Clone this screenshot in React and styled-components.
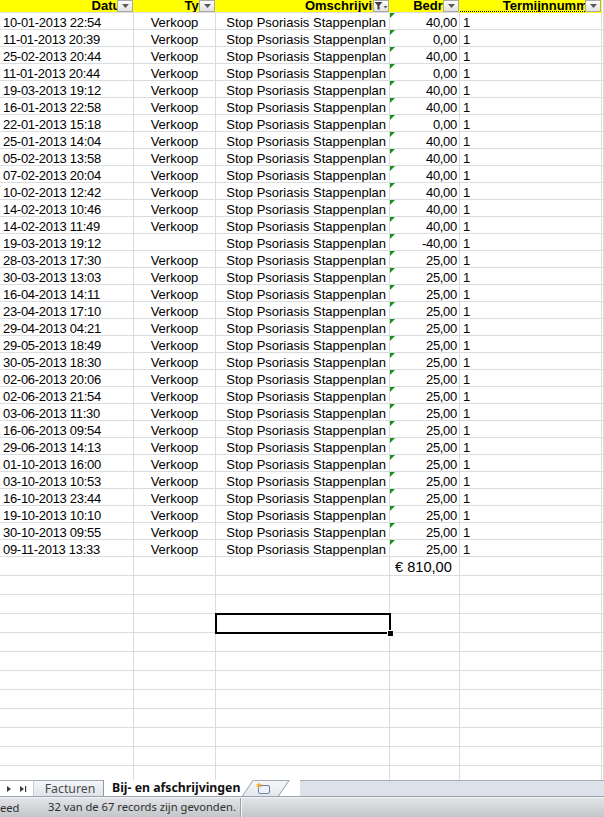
import React from "react";
import styled, { createGlobalStyle } from "styled-components";

const GlobalStyle = createGlobalStyle`
  html, body {
    margin: 0;
    padding: 0;
    height: 100%;
    overflow: hidden;
    background: #fff;
  }
  #root {
    height: 100%;
  }
`;

const COLS = "134px 82px 174px 70px 142px 1fr";
const GRID = "#dadcdd";

const rows = [
  ["10-01-2013 22:54", "Verkoop", "40,00"],
  ["11-01-2013 20:39", "Verkoop", "0,00"],
  ["25-02-2013 20:44", "Verkoop", "40,00"],
  ["11-01-2013 20:44", "Verkoop", "0,00"],
  ["19-03-2013 19:12", "Verkoop", "40,00"],
  ["16-01-2013 22:58", "Verkoop", "40,00"],
  ["22-01-2013 15:18", "Verkoop", "0,00"],
  ["25-01-2013 14:04", "Verkoop", "40,00"],
  ["05-02-2013 13:58", "Verkoop", "40,00"],
  ["07-02-2013 20:04", "Verkoop", "40,00"],
  ["10-02-2013 12:42", "Verkoop", "40,00"],
  ["14-02-2013 10:46", "Verkoop", "40,00"],
  ["14-02-2013 11:49", "Verkoop", "40,00"],
  ["19-03-2013 19:12", "", "-40,00"],
  ["28-03-2013 17:30", "Verkoop", "25,00"],
  ["30-03-2013 13:03", "Verkoop", "25,00"],
  ["16-04-2013 14:11", "Verkoop", "25,00"],
  ["23-04-2013 17:10", "Verkoop", "25,00"],
  ["29-04-2013 04:21", "Verkoop", "25,00"],
  ["29-05-2013 18:49", "Verkoop", "25,00"],
  ["30-05-2013 18:30", "Verkoop", "25,00"],
  ["02-06-2013 20:06", "Verkoop", "25,00"],
  ["02-06-2013 21:54", "Verkoop", "25,00"],
  ["03-06-2013 11:30", "Verkoop", "25,00"],
  ["16-06-2013 09:54", "Verkoop", "25,00"],
  ["29-06-2013 14:13", "Verkoop", "25,00"],
  ["01-10-2013 16:00", "Verkoop", "25,00"],
  ["03-10-2013 10:53", "Verkoop", "25,00"],
  ["16-10-2013 23:44", "Verkoop", "25,00"],
  ["19-10-2013 10:10", "Verkoop", "25,00"],
  ["30-10-2013 09:55", "Verkoop", "25,00"],
  ["09-11-2013 13:33", "Verkoop", "25,00"],
];

const headers = [
  { label: "Datum" },
  { label: "Type" },
  { label: "Omschrijving", filtered: true },
  { label: "Bedrag" },
  { label: "Termijnnummer", marquee: true },
];

const Arrow = () => (
  <svg width="7" height="4" viewBox="0 0 7 4">
    <path d="M0 0H7L3.5 4Z" fill="#595959" />
  </svg>
);

const Funnel = () => (
  <svg width="14" height="10" viewBox="0 0 14 10">
    <path d="M0.5 1H8.5L5.5 4.5V9L3.5 8V4.5Z" fill="#3c3c3c" />
    <path d="M9.5 5H13.5L11.5 7.5Z" fill="#595959" />
  </svg>
);

const NewSheetIcon = () => (
  <svg width="16" height="13" viewBox="0 0 16 13">
    <rect x="3.5" y="3.5" width="11" height="8" rx="1.5" fill="#eef3fb" stroke="#6d7f9c" />
    <path d="M1 2L3 2.6L4 0.5L5 2.6L7 2L5.6 3.6L6.6 5.4L4.4 4.6L3.6 6.6L3 4.6L1 5.2L2.4 3.6Z" fill="#f4a820" />
  </svg>
);

const NavArrows = () => (
  <svg width="30" height="16" viewBox="0 0 30 16">
    <path d="M7 5L11 8L7 11Z" fill="#3d3d3d" />
    <path d="M20 5L24 8L20 11Z" fill="#3d3d3d" />
    <rect x="25" y="5" width="1.2" height="6" fill="#3d3d3d" />
  </svg>
);

const App = () => {
  return (
    <Page>
      <GlobalStyle />
      <Sheet>
        <HeaderRow>
          {headers.map((h) => (
            <HeadCell key={h.label} $marquee={h.marquee}>
              {h.label}
              <FilterButton>{h.filtered ? <Funnel /> : <Arrow />}</FilterButton>
            </HeadCell>
          ))}
          <HeadCell $blank />
        </HeaderRow>
        {rows.map(([date, type, amount], i) => (
          <Row key={i} $h={17}>
            <Cell $pl={3} $tight>{date}</Cell>
            <Cell $align="center">{type}</Cell>
            <Cell $align="right" $pr={3}>Stop Psoriasis Stappenplan</Cell>
            <Cell $align="right" $pr={2} $flag $tight>{amount}</Cell>
            <Cell $pl={3}>1</Cell>
            <Cell />
          </Row>
        ))}
        <Row $h={19}>
          <Cell />
          <Cell />
          <Cell />
          <TotalCell>€ 810,00</TotalCell>
          <Cell />
          <Cell />
        </Row>
        {Array.from({ length: 12 }).map((_, i) => (
          <Row key={"e" + i} $h={19}>
            <Cell />
            <Cell />
            <Cell $open={i === 2}>{i === 2 && <Selection />}</Cell>
            <Cell />
            <Cell />
            <Cell />
          </Row>
        ))}
      </Sheet>
      <TabBar>
        <Nav>
          <NavArrows />
        </Nav>
        <SheetTab>Facturen</SheetTab>
        <ActiveTab>Bij- en afschrijvingen</ActiveTab>
        <NewTab>
          <NewSheetIcon />
        </NewTab>
        <TabGap />
        <ScrollArea />
      </TabBar>
      <StatusBar>
        <StatusLead>eed</StatusLead>
        <StatusItem>32 van de 67 records zijn gevonden.</StatusItem>
      </StatusBar>
    </Page>
  );
};

const Page = styled.div`
  height: 817px;
  display: flex;
  flex-direction: column;
  overflow: hidden;
  font-family: "Liberation Sans", Arial, sans-serif;
`;

const Sheet = styled.div`
  flex: 1;
  min-height: 0;
  overflow: hidden;
`;

const HeaderRow = styled.div`
  display: grid;
  grid-template-columns: ${COLS};
  height: 13px;
`;

const HeadCell = styled.div`
  position: relative;
  box-sizing: border-box;
  height: 13px;
  overflow: hidden;
  white-space: nowrap;
  text-align: right;
  padding-right: 1px;
  font: bold 13px/12px "Liberation Sans", Arial, sans-serif;
  color: #000;
  background: ${({ $blank }) => ($blank ? "#fff" : "#ffff00")};
  border-right: 1px solid ${({ $blank }) => ($blank ? GRID : "transparent")};
  border-bottom: 1px solid ${({ $marquee }) => ($marquee ? "transparent" : GRID)};
  ${({ $marquee }) =>
    $marquee &&
    `
    &::after {
      content: "";
      position: absolute;
      left: 0;
      right: 16px;
      bottom: 0;
      border-bottom: 1px dotted #000;
    }
  `}
`;

const FilterButton = styled.span`
  position: absolute;
  top: 0;
  right: 0;
  width: 16px;
  height: 12px;
  box-sizing: border-box;
  border: 1px solid #a9a9a9;
  background: linear-gradient(#fdfdfd, #e2e2e2);
  display: flex;
  align-items: center;
  justify-content: center;
`;

const Row = styled.div`
  display: grid;
  grid-template-columns: ${COLS};
  height: ${({ $h }) => $h}px;
`;

const Cell = styled.div`
  position: relative;
  box-sizing: border-box;
  border-right: 1px solid ${GRID};
  border-bottom: 1px solid ${GRID};
  overflow: ${({ $open }) => ($open ? "visible" : "hidden")};
  white-space: nowrap;
  font-size: 13px;
  line-height: 15px;
  padding-top: 2px;
  color: #000;
  letter-spacing: ${({ $tight }) => ($tight ? "-0.3px" : "0")};
  text-align: ${({ $align }) => $align || "left"};
  padding-left: ${({ $pl }) => $pl || 0}px;
  padding-right: ${({ $pr }) => $pr || 0}px;
  ${({ $flag }) =>
    $flag &&
    `
    &::before {
      content: "";
      position: absolute;
      top: 0;
      left: 0;
      border-top: 5px solid #16921a;
      border-right: 5px solid transparent;
    }
  `}
`;

const TotalCell = styled(Cell)`
  font-size: 14.6px;
  line-height: 17px;
  padding-top: 2px;
  padding-left: 5px;
`;

const Selection = styled.span`
  position: absolute;
  top: -1px;
  left: -1px;
  right: -2px;
  bottom: -2px;
  border: 2px solid #000;
  z-index: 2;
  &::after {
    content: "";
    position: absolute;
    right: -5px;
    bottom: -5px;
    width: 5px;
    height: 5px;
    background: #000;
    border: 1px solid #fff;
  }
`;

const TabBar = styled.div`
  display: flex;
  height: 17px;
  box-sizing: border-box;
  border-bottom: 1px solid #9ca2ac;
  background: #fff;
  font-family: "Noto Sans", "Open Sans", sans-serif;
`;

const Nav = styled.div`
  width: 34px;
  box-sizing: border-box;
  border-top: 1px solid #aab0b9;
  border-right: 1px solid #c8cdd4;
  display: flex;
  align-items: center;
  overflow: hidden;
`;

const SheetTab = styled.div`
  width: 69px;
  box-sizing: border-box;
  border-top: 1px solid #a3a9b2;
  background: linear-gradient(#f4f6f8, #dfe3e9);
  color: #4a4a4a;
  font-size: 12.3px;
  line-height: 15px;
  text-align: center;
  padding-left: 3px;
`;

const ActiveTab = styled.div`
  position: relative;
  z-index: 2;
  width: 140px;
  box-sizing: border-box;
  border-left: 1px solid #8f98a6;
  background: #fff;
  color: #111;
  font-weight: bold;
  font-size: 12.3px;
  line-height: 15px;
  padding-left: 8px;
  white-space: nowrap;
  &::after {
    content: "";
    position: absolute;
    z-index: -1;
    top: 0;
    bottom: 0;
    right: 0;
    width: 20px;
    background: #fff;
    border-right: 1px solid #8f98a6;
    transform-origin: bottom right;
    transform: skewX(-34deg);
  }
`;

const NewTab = styled.div`
  position: relative;
  width: 36px;
  display: flex;
  align-items: center;
  justify-content: center;
  padding-left: 4px;
  box-sizing: border-box;
  &::before {
    content: "";
    position: absolute;
    z-index: 0;
    top: 0;
    bottom: 0;
    left: 0;
    right: 0;
    box-sizing: border-box;
    border-top: 1px solid #a3a9b2;
    border-right: 1px solid #8f98a6;
    background: linear-gradient(#f6f7f9, #e4e8ee);
    transform-origin: bottom left;
    transform: skewX(-34deg);
  }
  svg {
    position: relative;
  }
`;

const TabGap = styled.div`
  width: 21px;
`;

const ScrollArea = styled.div`
  flex: 1;
  box-sizing: border-box;
  border-top: 1px solid #a6acb5;
  background: #dde1e9;
`;

const StatusBar = styled.div`
  height: 20px;
  box-sizing: border-box;
  border-top: 1px solid #f2f3f5;
  background: linear-gradient(#e2e4e7, #c3c6ca);
  display: flex;
  align-items: center;
  font-family: "Noto Sans", "Open Sans", sans-serif;
  font-size: 11.2px;
  color: #2e2e2e;
`;

const StatusLead = styled.div`
  width: 48px;
`;

const StatusItem = styled.div`
  width: 193px;
  height: 100%;
  box-sizing: border-box;
  line-height: 18px;
  border-right: 1px solid #9da2a8;
  box-shadow: 1px 0 0 #f4f5f6;
  white-space: nowrap;
`;

export default App;
